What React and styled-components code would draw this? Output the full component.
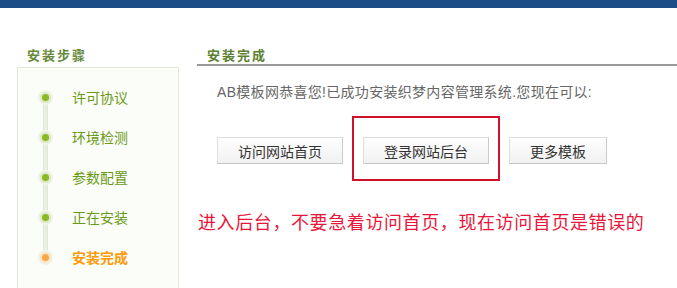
import React from 'react';
import styled, { createGlobalStyle } from 'styled-components';

const GlobalStyle = createGlobalStyle`
  html, body {
    margin: 0;
    padding: 0;
    background: #fff;
    font-family: "Liberation Sans", "Noto Sans CJK SC", sans-serif;
    font-size: 14px;
  }
`;

const TopBar = styled.div`
  height: 8px;
  background: #1d4d86;
`;

const Layout = styled.div`
  display: flex;
  align-items: flex-start;
  padding-left: 17px;
  gap: 18px;
`;

const Sidebar = styled.aside`
  width: 162px;
  flex-shrink: 0;
`;

const SideTitle = styled.h3`
  margin: 0;
  padding: 36px 0 0 10px;
  height: 23px;
  line-height: 23px;
  font-size: 13px;
  font-weight: bold;
  letter-spacing: 2px;
  color: #67893a;
`;

const StepBox = styled.ul`
  list-style: none;
  margin: 0;
  padding: 9px 0 20px;
  min-height: 200px;
  border: 1px solid #e2eadb;
  border-bottom: none;
  background: #fbfdf9;
`;

const Step = styled.li`
  position: relative;
  display: flex;
  align-items: center;
  height: 40px;
  padding-left: 22px;
  gap: 21px;
  font-size: 14px;
  color: ${(p) => (p.$current ? '#ff9a0a' : '#6b9a18')};
  font-weight: ${(p) => (p.$current ? 'bold' : 'normal')};

  &:not(:last-child)::after {
    content: '';
    position: absolute;
    left: 25px;
    top: 20px;
    width: 3px;
    height: 40px;
    background: #eaf1e2;
    border-left: 1px solid #dfe8d6;
    border-right: 1px solid #dfe8d6;
  }
`;

const Dot = styled.span`
  position: relative;
  z-index: 1;
  box-sizing: border-box;
  width: 11px;
  height: 11px;
  border-radius: 50%;
  background: ${(p) => (p.$current ? '#f7a94a' : '#8cb927')};
  border: 2px solid ${(p) => (p.$current ? '#fde3c2' : '#dbe9c4')};
  box-shadow: 0 0 0 2px #eef4e7;
`;

const Main = styled.main`
  flex: 1;
`;

const MainTitle = styled.h3`
  margin: 0;
  padding: 38px 0 0 10px;
  height: 18px;
  line-height: 20px;
  font-size: 13px;
  font-weight: bold;
  letter-spacing: 2px;
  color: #5d7f31;
  border-bottom: 2px solid #999;
`;

const Intro = styled.p`
  margin: 16px 0 0 20px;
  font-size: 14px;
  line-height: 20px;
  letter-spacing: 0.3px;
  color: #666;
`;

const Actions = styled.div`
  display: flex;
  gap: 20px;
  margin: 35px 0 0 20px;
`;

const Button = styled.button`
  height: 27px;
  padding: 0 20px;
  font-family: inherit;
  font-size: 14px;
  color: #333;
  background: linear-gradient(#fefefe, #f1f1f1);
  border: 1px solid #dedede;
  border-right-color: #cacaca;
  border-bottom-color: #c6c6c6;
  cursor: pointer;
`;

const Highlight = styled.span`
  position: relative;
  display: inline-flex;

  &::before {
    content: '';
    position: absolute;
    left: -11px;
    right: -11px;
    top: -21px;
    bottom: -17px;
    border: 2px solid #d0112b;
    pointer-events: none;
  }
`;

const Warning = styled.p`
  margin: 47px 0 0 1px;
  font-size: 18px;
  line-height: 24px;
  letter-spacing: 0.6px;
  color: #e8163b;
`;

const steps = ['许可协议', '环境检测', '参数配置', '正在安装', '安装完成'];

export default function App() {
  return (
    <>
      <GlobalStyle />
      <TopBar />
      <Layout>
        <Sidebar>
          <SideTitle>安装步骤</SideTitle>
          <StepBox>
            {steps.map((s, i) => {
              const current = i === steps.length - 1;
              return (
                <Step key={s} $current={current}>
                  <Dot $current={current} />
                  {s}
                </Step>
              );
            })}
          </StepBox>
        </Sidebar>
        <Main>
          <MainTitle>安装完成</MainTitle>
          <Intro>AB模板网恭喜您!已成功安装织梦内容管理系统.您现在可以:</Intro>
          <Actions>
            <Button>访问网站首页</Button>
            <Highlight>
              <Button>登录网站后台</Button>
            </Highlight>
            <Button>更多模板</Button>
          </Actions>
          <Warning>进入后台，不要急着访问首页，现在访问首页是错误的</Warning>
        </Main>
      </Layout>
    </>
  );
}
